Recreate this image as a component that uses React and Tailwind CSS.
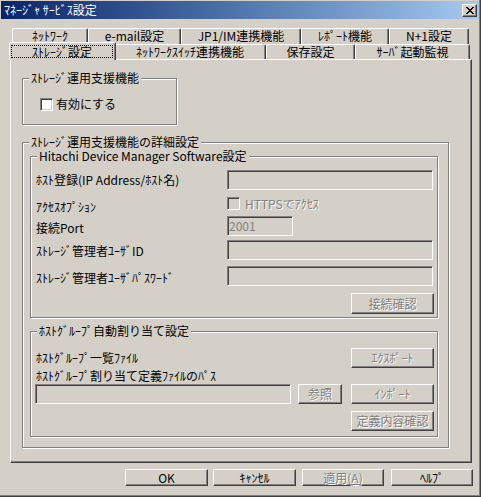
import React from "react";

const sunken =
  "border border-t-[#808080] border-l-[#808080] border-b-white border-r-white shadow-[inset_1px_1px_0_#404040,inset_-1px_-1px_0_#d4d0c8]";
const raised =
  "border border-t-white border-l-white border-b-[#404040] border-r-[#404040] shadow-[inset_-1px_-1px_0_#808080] bg-[#d4d0c8]";
const dis = "text-[#808080] [text-shadow:1px_1px_0_#ffffff]";

function Btn({ children, className = "", disabled }) {
  return (
    <div
      className={`${raised} flex items-center justify-center shrink-0 whitespace-nowrap ${
        disabled ? dis : "text-black"
      } ${className}`}
    >
      {children}
    </div>
  );
}

function Field({ className = "", children }) {
  return <div className={`${sunken} bg-[#d4d0c8] shrink-0 ${className}`}>{children}</div>;
}

function Check({ disabled }) {
  return (
    <div
      className={`${sunken} w-[13px] h-[13px] shrink-0 ${disabled ? "bg-[#d4d0c8]" : "bg-white"}`}
    />
  );
}

function Group({ title, className = "", children }) {
  return (
    <div
      className={`relative shrink-0 border border-[#808080] shadow-[inset_1px_1px_0_#ffffff,1px_1px_0_#ffffff] ${className}`}
    >
      <span className="absolute -top-[7px] left-[6px] px-[2px] bg-[#d4d0c8] whitespace-nowrap leading-[12px]">
        {title}
      </span>
      {children}
    </div>
  );
}

function Tab({ className = "", children }) {
  return (
    <div
      className={`shrink-0 border-l border-t border-r border-l-white border-t-white border-r-[#404040] shadow-[inset_-1px_0_0_#808080] rounded-t-[2px] bg-[#d4d0c8] flex justify-center whitespace-nowrap ${className}`}
    >
      {children}
    </div>
  );
}

export default function App() {
  return (
    <div className="w-[481px] h-[497px] bg-[#d4d0c8] pl-[1px] pt-[1px] border-r border-b border-r-[#404040] border-b-[#404040] shadow-[inset_-1px_-1px_0_#808080] font-['Noto_Sans_CJK_JP',sans-serif] text-[12px] leading-[14px] text-black overflow-hidden flex flex-col">
      {/* Title bar */}
      <div className="h-[18px] w-[478px] shrink-0 flex items-center justify-between bg-linear-to-r from-[#0a246a] to-[#a6caf0] pl-[3px] pr-[2px]">
        <span className="text-white whitespace-nowrap">ﾏﾈｰｼﾞｬ ｻｰﾋﾞｽ設定</span>
        <div className={`${raised} w-[15px] h-[13px] flex items-center justify-center`}>
          <svg width="8" height="7" viewBox="0 0 8 7" shapeRendering="crispEdges">
            <path d="M0 0h2v1h1v1h2V1h1V0h2v1H7v1H6v1H5v1h1v1h1v1h1v1H6V6H5V5H3v1H2v1H0V6h1V5h1V4h1V3H2V2H1V1H0z" fill="#000" />
          </svg>
        </div>
      </div>

      {/* Tab control */}
      <div className="mt-[9px] ml-[9px] w-[462px] shrink-0 flex flex-col">
        <div className="h-[16px] flex pl-[2px]">
          <Tab className="w-[76px] leading-[13px]">ﾈｯﾄﾜｰｸ</Tab>
          <Tab className="w-[93px] leading-[13px]">e-mail設定</Tab>
          <Tab className="w-[120px] leading-[13px]">JP1/IM連携機能</Tab>
          <Tab className="w-[88px] leading-[13px]">ﾚﾎﾟｰﾄ機能</Tab>
          <Tab className="w-[80px] leading-[13px]">N+1設定</Tab>
        </div>
        <div className="h-[15px] flex items-end">
          <Tab className="w-[107px] h-[18px] -ml-[1px] -mr-[2px] -mb-[1px] relative z-10">
            <div className="mt-[2px] ml-[1px] mr-[2px] h-[13px] flex-1 border border-dotted border-black flex items-center justify-center">
              ｽﾄﾚｰｼﾞ設定
            </div>
          </Tab>
          <Tab className="w-[152px] h-[15px] items-center">ﾈｯﾄﾜｰｸｽｲｯﾁ連携機能</Tab>
          <Tab className="w-[89px] h-[15px] items-center">保存設定</Tab>
          <Tab className="w-[115px] h-[15px] items-center">ｻｰﾊﾞ起動監視</Tab>
        </div>

        {/* Panel */}
        <div className="w-[462px] h-[404px] border border-t-white border-l-white border-r-[#404040] border-b-[#404040] shadow-[inset_-1px_-1px_0_#808080] flex flex-col pl-[11px] pt-[18px]">
          <Group title="ｽﾄﾚｰｼﾞ運用支援機能" className="w-[155px] h-[47px]">
            <div className="pl-[17px] pt-[18px] flex items-center">
              <Check />
              <span className="ml-[3px]">有効にする</span>
            </div>
          </Group>

          <Group
            title="ｽﾄﾚｰｼﾞ運用支援機能の詳細設定"
            className="mt-[17px] w-[427px] h-[306px] flex flex-col pl-[7px] pt-[13px]"
          >
            <Group
              title="Hitachi Device Manager Software設定"
              className="w-[408px] h-[162px] flex flex-col pl-[5px] pt-[13px]"
            >
              <div className="h-[20px] flex items-center">
                <span className="w-[191px] shrink-0 whitespace-nowrap">ﾎｽﾄ登録(IP Address/ﾎｽﾄ名)</span>
                <Field className="w-[206px] h-[20px]" />
              </div>
              <div className="mt-[7px] h-[13px] flex items-center">
                <span className="w-[191px] shrink-0 whitespace-nowrap pt-[6px]">ｱｸｾｽｵﾌﾟｼｮﾝ</span>
                <Check disabled />
                <span className={`ml-[5px] whitespace-nowrap ${dis}`}>HTTPSでｱｸｾｽ</span>
              </div>
              <div className="mt-[6px] h-[20px] flex items-center">
                <span className="w-[191px] shrink-0 whitespace-nowrap pt-[4px]">接続Port</span>
                <Field className="w-[66px] h-[20px] flex items-center pl-[1px] text-[#808080]">2001</Field>
              </div>
              <div className="mt-[4px] h-[20px] flex items-center">
                <span className="w-[191px] shrink-0 whitespace-nowrap pt-[2px]">ｽﾄﾚｰｼﾞ管理者ﾕｰｻﾞID</span>
                <Field className="w-[206px] h-[20px]" />
              </div>
              <div className="mt-[6px] h-[20px] flex items-center">
                <span className="w-[191px] shrink-0 whitespace-nowrap pt-[4px]">ｽﾄﾚｰｼﾞ管理者ﾕｰｻﾞﾊﾟｽﾜｰﾄﾞ</span>
                <Field className="w-[206px] h-[20px]" />
              </div>
              <div className="mt-[7px] flex">
                <Btn disabled className="ml-[315px] w-[83px] h-[21px]">
                  接続確認
                </Btn>
              </div>
            </Group>

            <Group
              title="ﾎｽﾄｸﾞﾙｰﾌﾟ自動割り当て設定"
              className="mt-[13px] w-[408px] h-[106px] flex flex-col pl-[5px] pt-[16px]"
            >
              <div className="h-[20px] flex items-center">
                <span className="w-[315px] shrink-0 whitespace-nowrap">ﾎｽﾄｸﾞﾙｰﾌﾟ一覧ﾌｧｲﾙ</span>
                <Btn disabled className="w-[83px] h-[20px]">
                  ｴｸｽﾎﾟｰﾄ
                </Btn>
              </div>
              <div className="mt-[1px] h-[14px] whitespace-nowrap">ﾎｽﾄｸﾞﾙｰﾌﾟ割り当て定義ﾌｧｲﾙのﾊﾟｽ</div>
              <div className="mt-[1px] h-[20px] flex items-center">
                <Field className="-ml-[1px] w-[256px] h-[20px]" />
                <Btn disabled className="ml-[7px] w-[44px] h-[20px]">
                  参照
                </Btn>
                <Btn disabled className="ml-[9px] w-[83px] h-[20px]">
                  ｲﾝﾎﾟｰﾄ
                </Btn>
              </div>
              <div className="mt-[7px] flex">
                <Btn disabled className="ml-[315px] w-[83px] h-[20px]">
                  定義内容確認
                </Btn>
              </div>
            </Group>
          </Group>
        </div>
      </div>

      {/* Bottom buttons */}
      <div className="mt-[6px] flex">
        <Btn className="ml-[124px] w-[83px] h-[17px]">OK</Btn>
        <Btn className="ml-[5px] w-[83px] h-[17px]">ｷｬﾝｾﾙ</Btn>
        <Btn disabled className="ml-[6px] w-[82px] h-[17px]">
          適用(<span className="underline">A</span>)
        </Btn>
        <Btn className="ml-[7px] w-[82px] h-[17px]">ﾍﾙﾌﾟ</Btn>
      </div>
    </div>
  );
}
